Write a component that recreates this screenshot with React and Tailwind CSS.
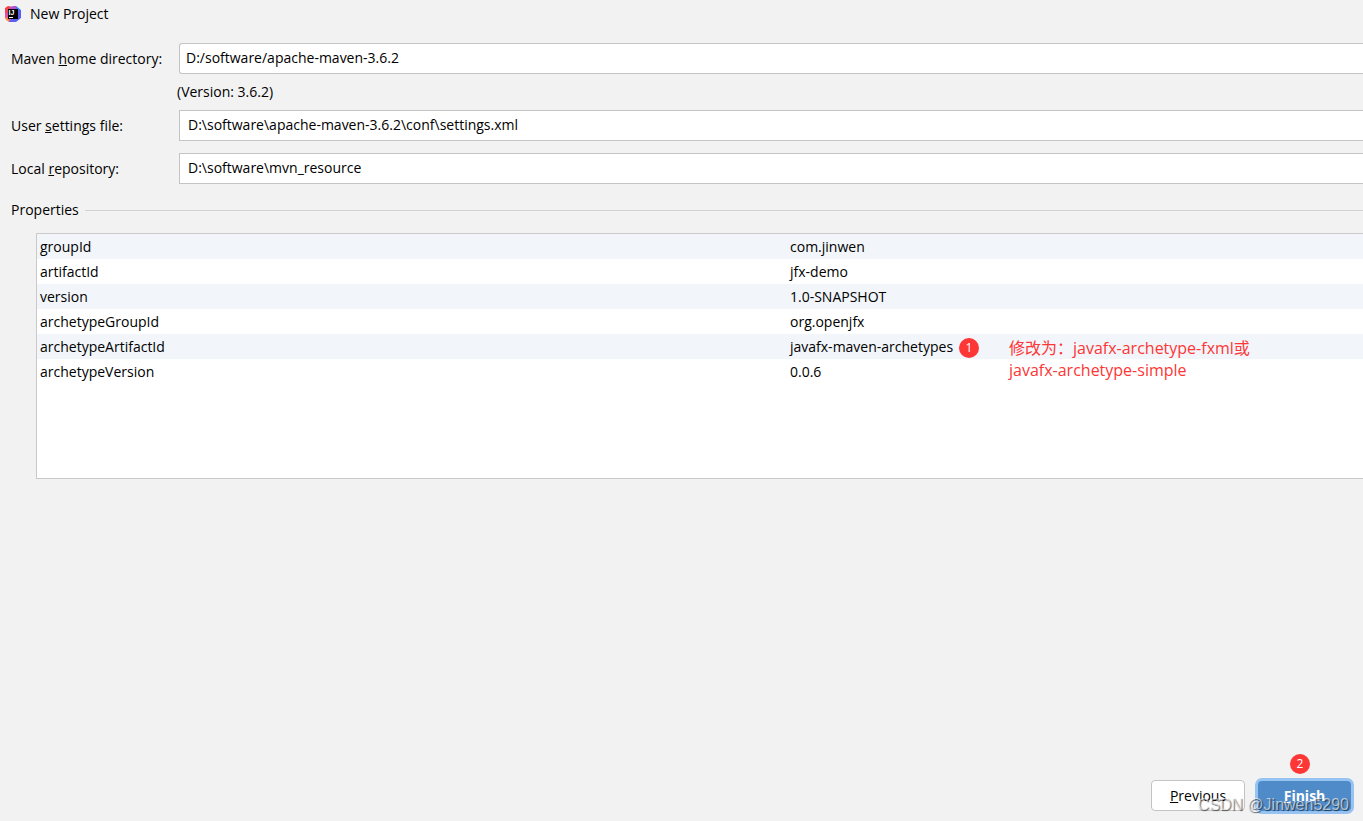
import { useState } from "react";

const initialProperties = [
  { name: "groupId", value: "com.jinwen" },
  { name: "artifactId", value: "jfx-demo" },
  { name: "version", value: "1.0-SNAPSHOT" },
  { name: "archetypeGroupId", value: "org.openjfx" },
  { name: "archetypeArtifactId", value: "javafx-maven-archetypes" },
  { name: "archetypeVersion", value: "0.0.6" },
];

function IdeaLogo() {
  return (
    <svg width="16" height="16" viewBox="0 0 16 16" aria-hidden="true">
      <path d="M0 2 L3 0 L8 1 L8 9 L0 9 Z" fill="#f4424f" />
      <path d="M0 6 L3 8 L7 16 L4 16 L0 12 Z" fill="#e04fa0" />
      <path d="M0 11 L3 12 L5 16 L1 14 Z" fill="#fb8a3c" />
      <path d="M8 1 L11 0 L16 4 L16 9 L8 8 Z" fill="#3b7cf6" />
      <path d="M5 1 L9 0 L11 0 L11 4 L5 6 Z" fill="#b04fd0" />
      <path d="M15 4 L16 5 L16 12 L11 16 L4 16 L8 10 Z" fill="#5a5ff0" />
      <rect x="3" y="3" width="10" height="10" fill="#000" />
      <text x="3.6" y="9" fontSize="7" fontWeight="700" fontFamily="Liberation Sans, sans-serif" fill="#fff">
        IJ
      </text>
      <rect x="4" y="11" width="4" height="1" fill="#fff" />
    </svg>
  );
}

function Badge({ children, className }) {
  return (
    <span
      className={`absolute flex size-5 items-center justify-center rounded-full bg-[#fd3636] text-xs text-white ${className}`}
    >
      {children}
    </span>
  );
}

export default function App() {
  const [home, setHome] = useState("D:/software/apache-maven-3.6.2");
  const [settings, setSettings] = useState("D:\\software\\apache-maven-3.6.2\\conf\\settings.xml");
  const [repository, setRepository] = useState("D:\\software\\mvn_resource");

  return (
    <div className="relative flex min-h-screen flex-col overflow-hidden bg-[#f2f2f2] font-['Open_Sans','Noto_Sans_CJK_SC',sans-serif] text-sm text-black">
      {/* Title bar */}
      <header className="flex h-7 items-center gap-[9px] pl-[5px]">
        <IdeaLogo />
        <h1>New Project</h1>
      </header>

      <main className="flex flex-col pt-[15px]">
        {/* Maven settings */}
        <div className="grid grid-cols-[168px_1fr] items-center pl-[11px]">
          <label htmlFor="home">
            Maven <u>h</u>ome directory:
          </label>
          <input
            id="home"
            value={home}
            onChange={(e) => setHome(e.target.value)}
            className="h-[31px] rounded-l-[3px] border border-r-0 border-[#c4c4c4] bg-white pb-0.5 pl-1.5 outline-none"
          />
          <p className="col-start-2 -ml-0.5 py-2">(Version: 3.6.2)</p>
          <label htmlFor="settings">
            User <u>s</u>ettings file:
          </label>
          <input
            id="settings"
            value={settings}
            onChange={(e) => setSettings(e.target.value)}
            className="h-[31px] border border-r-0 border-[#c4c4c4] bg-white pb-0.5 pl-2 outline-none"
          />
          <label htmlFor="repository" className="mt-3">
            Local <u>r</u>epository:
          </label>
          <input
            id="repository"
            value={repository}
            onChange={(e) => setRepository(e.target.value)}
            className="mt-3 h-[31px] border border-r-0 border-[#c4c4c4] bg-white pb-0.5 pl-2 outline-none"
          />
        </div>

        {/* Properties */}
        <section className="mt-4">
          <div className="flex items-center gap-1.5 pl-[11px]">
            <h2>Properties</h2>
            <div className="h-px flex-1 bg-[#d1d1d1]" />
          </div>
          <div className="relative mt-[13px] ml-9 h-[246px] border border-r-0 border-[#c9c9c9] bg-white">
            <table className="w-full table-fixed">
              <tbody>
                {initialProperties.map((property) => (
                  <tr key={property.name} className="h-[25px] odd:bg-[#f2f5fa]">
                    <td className="w-[750px] pl-[3px]">{property.name}</td>
                    <td className="pl-[3px]">{property.value}</td>
                  </tr>
                ))}
              </tbody>
            </table>
            <Badge className="top-[104px] left-[922px]">1</Badge>
            <p className="absolute top-[103px] left-[972px] text-base leading-[22px] text-[#fd3636]">
              修改为：javafx-archetype-fxml或
              <br />
              javafx-archetype-simple
            </p>
          </div>
        </section>
      </main>

      {/* Wizard buttons */}
      <footer className="mt-auto flex items-center justify-end gap-[13px] pr-3 pb-2.5">
        <button className="h-[31px] w-[94px] rounded border border-[#c4c4c4] bg-white">
          <u>P</u>revious
        </button>
        <div className="relative">
          <button className="h-[30px] w-[93px] rounded-sm bg-[#4f8bc9] font-bold text-white ring-3 ring-[#97c3f3]">
            <u>F</u>inish
          </button>
          <Badge className="-top-[27px] left-8">2</Badge>
        </div>
      </footer>

      {/* Watermark */}
      <span className="pointer-events-none absolute right-3.5 bottom-1 font-['Liberation_Sans',sans-serif] text-base text-white/60 [text-shadow:1px_1px_1px_rgba(0,0,0,0.6)]">
        CSDN @Jinwen5290
      </span>
    </div>
  );
}
